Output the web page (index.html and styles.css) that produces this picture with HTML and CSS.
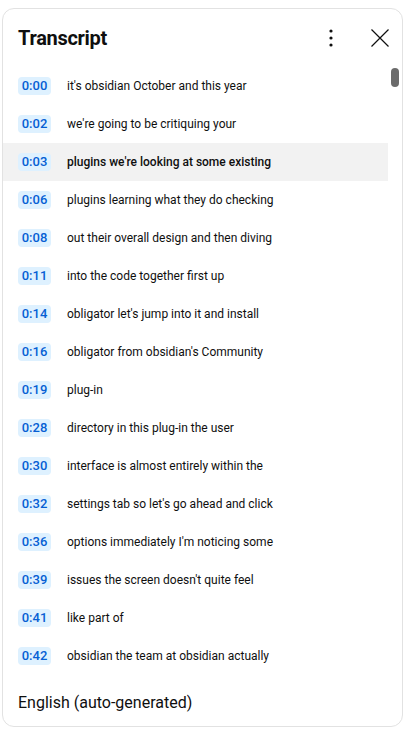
FILE: index.html
```html
<!DOCTYPE html>
<html>
<head>
<meta charset="utf-8">
<link rel="stylesheet" href="styles.css">
</head>
<body>
<div class="card">
  <div class="header">
    <h1 class="title">Transcript</h1>
    <div class="actions">
      <button class="icon-btn" aria-label="More">
        <svg width="24" height="24" viewBox="0 0 24 24"><circle cx="12" cy="5" r="1.6"/><circle cx="12" cy="12" r="1.6"/><circle cx="12" cy="19" r="1.6"/></svg>
      </button>
      <button class="icon-btn" aria-label="Close">
        <svg width="24" height="24" viewBox="0 0 24 24"><path d="M3.5 3.5 L20.5 20.5 M20.5 3.5 L3.5 20.5" stroke="#0f0f0f" stroke-width="1.2" fill="none"/></svg>
      </button>
    </div>
  </div>
  <div class="list-wrap">
    <div class="list">
      <div class="row"><span class="ts">0:00</span><span class="txt">it's obsidian October and this year</span></div>
      <div class="row"><span class="ts">0:02</span><span class="txt">we're going to be critiquing your</span></div>
      <div class="row active"><span class="ts">0:03</span><span class="txt">plugins we're looking at some existing</span></div>
      <div class="row"><span class="ts">0:06</span><span class="txt">plugins learning what they do checking</span></div>
      <div class="row"><span class="ts">0:08</span><span class="txt">out their overall design and then diving</span></div>
      <div class="row"><span class="ts">0:11</span><span class="txt">into the code together first up</span></div>
      <div class="row"><span class="ts">0:14</span><span class="txt">obligator let's jump into it and install</span></div>
      <div class="row"><span class="ts">0:16</span><span class="txt">obligator from obsidian's Community</span></div>
      <div class="row"><span class="ts">0:19</span><span class="txt">plug-in</span></div>
      <div class="row"><span class="ts">0:28</span><span class="txt">directory in this plug-in the user</span></div>
      <div class="row"><span class="ts">0:30</span><span class="txt">interface is almost entirely within the</span></div>
      <div class="row"><span class="ts">0:32</span><span class="txt">settings tab so let's go ahead and click</span></div>
      <div class="row"><span class="ts">0:36</span><span class="txt">options immediately I'm noticing some</span></div>
      <div class="row"><span class="ts">0:39</span><span class="txt">issues the screen doesn't quite feel</span></div>
      <div class="row"><span class="ts">0:41</span><span class="txt">like part of</span></div>
      <div class="row"><span class="ts">0:42</span><span class="txt">obsidian the team at obsidian actually</span></div>
    </div>
    <div class="thumb"></div>
  </div>
  <div class="footer">English (auto-generated)</div>
</div>
</body>
</html>
```
FILE: styles.css
```css
* { box-sizing: border-box; }
html, body { margin: 0; padding: 0; background: #fff; }
body { font-family: Roboto, "Liberation Sans", Arial, sans-serif; color: #0f0f0f; }

.card {
  margin: 8px 0 0 2px;
  width: 401px;
  height: 719px;
  border: 1px solid #e2e2e2;
  border-radius: 12px;
  display: flex;
  flex-direction: column;
  overflow: hidden;
}

.header {
  height: 58px;
  display: flex;
  align-items: center;
  justify-content: space-between;
  padding: 0 10px 0 15px;
  flex: none;
}
.title {
  margin: 0;
  font-size: 20px;
  font-weight: 700;
  letter-spacing: -0.3px;
  line-height: 28px;
}
.actions { display: flex; align-items: center; gap: 25px; }
.icon-btn {
  border: 0; background: none; padding: 0;
  width: 24px; height: 24px;
  display: flex; align-items: center; justify-content: center;
}
.icon-btn svg { fill: #0f0f0f; display: block; }

.list-wrap { position: relative; flex: none; height: 608px; overflow: hidden; }
.list { width: 385px; }
.row {
  height: 38px;
  display: flex;
  align-items: center;
  padding-left: 15px;
}
.row.active { background: #f2f2f2; }
.row.active .txt { font-weight: 500; }
.ts {
  width: 33px;
  height: 18px;
  border-radius: 4px;
  background: #def1ff;
  color: #065fd4;
  font-size: 13px;
  font-weight: 500;
  line-height: 18px;
  text-align: center;
  flex: none;
}
.txt {
  margin-left: 16px;
  font-size: 12px;
  line-height: 16px;
  color: #0f0f0f;
  white-space: nowrap;
}
.thumb {
  position: absolute;
  left: 388px;
  top: 1px;
  width: 8px;
  height: 19px;
  border-radius: 4px;
  background: #6b6b6b;
}

.footer {
  flex: 1;
  display: flex;
  align-items: center;
  padding: 4px 15px 0;
  font-size: 16px;
  line-height: 22px;
}
```
